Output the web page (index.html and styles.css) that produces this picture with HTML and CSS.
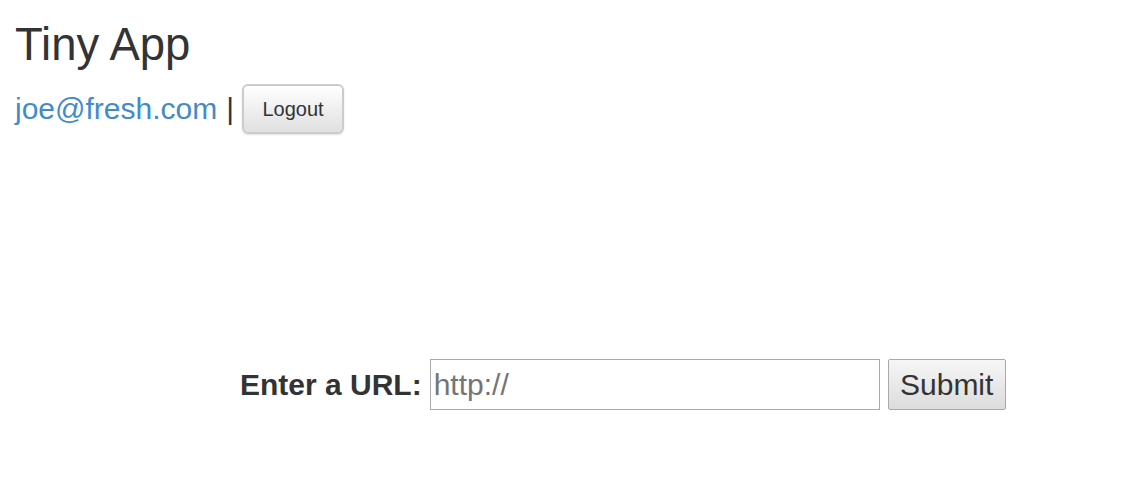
FILE: index.html
```html
<!DOCTYPE html>
<html>
<head>
<meta charset="utf-8">
<link rel="stylesheet" href="styles.css">
</head>
<body>
<header class="top">
  <h1 class="title">Tiny App</h1>
  <div class="user-row">
    <a class="email" href="#">joe@fresh.com</a>
    <span class="sep">|</span>
    <button class="btn-logout" type="button">Logout</button>
  </div>
</header>
<main class="main">
  <form class="url-form">
    <label class="url-label" for="longURL">Enter a URL:</label>
    <input class="url-input" id="longURL" type="text" placeholder="http://">
    <button class="btn-submit" type="submit">Submit</button>
  </form>
</main>
</body>
</html>
```
FILE: styles.css
```css
* { box-sizing: border-box; }
body {
  margin: 0;
  padding: 0 15px;
  font-family: "Liberation Sans", Arial, sans-serif;
  color: #333;
  background: #fff;
}
.title {
  margin: 20px 0 0 0;
  font-size: 45.5px;
  font-weight: 400;
  line-height: 1.1;
}
.user-row {
  margin-top: 14px;
  height: 50px;
  display: flex;
  align-items: center;
  font-size: 30px;
  line-height: 1.15;
}
.email {
  color: #428bca;
  text-decoration: none;
}
.sep {
  margin-left: 9px;
}
.btn-logout {
  margin-left: 8px;
  width: 102px;
  height: 50px;
  padding: 0;
  font-family: "Liberation Sans", Arial, sans-serif;
  font-size: 20px;
  color: #333;
  border: 2px solid #ccc;
  border-radius: 6px;
  background: linear-gradient(to bottom, #fff 0%, #e0e0e0 100%);
  box-shadow: 0 1px 2px rgba(0,0,0,0.12);
  cursor: pointer;
}
.main {
  margin-top: 225px;
  padding-left: 225px;
}
.url-form {
  display: flex;
  align-items: center;
  height: 51px;
}
.url-label {
  font-size: 30px;
  font-weight: 700;
  margin-right: 8px;
}
.url-input {
  width: 450px;
  height: 51px;
  border: 1px solid #a9a9a9;
  padding: 0 3px;
  font-family: "Liberation Sans", Arial, sans-serif;
  font-size: 30px;
  color: #333;
  outline: none;
}
.url-input::placeholder {
  color: #757575;
}
.btn-submit {
  margin-left: 8px;
  width: 118px;
  height: 51px;
  padding: 0;
  font-family: "Liberation Sans", Arial, sans-serif;
  font-size: 30px;
  color: #333;
  border: 1px solid #a9a9a9;
  border-radius: 2px;
  background: linear-gradient(to bottom, #f6f6f6 0%, #dcdcdc 100%);
}
```
